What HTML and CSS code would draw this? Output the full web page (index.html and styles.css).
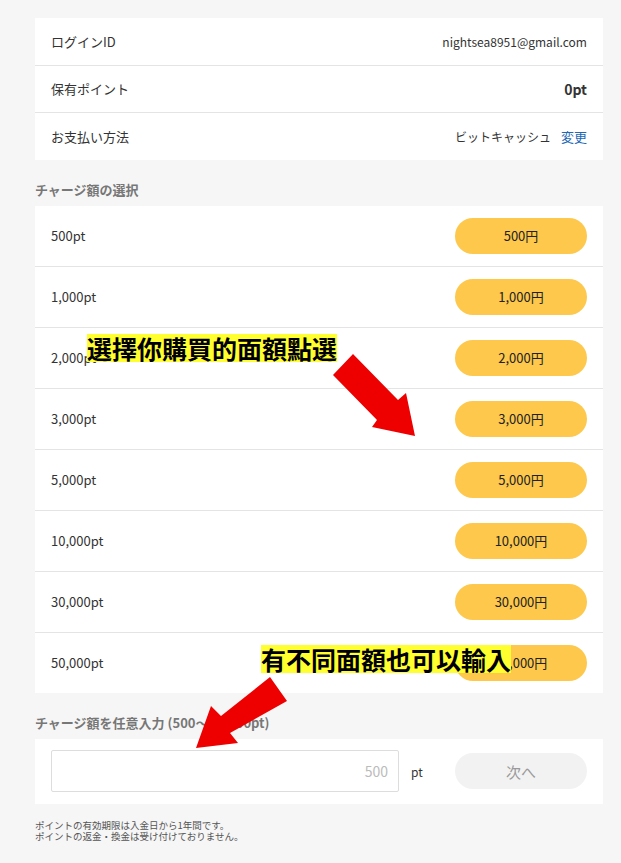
FILE: index.html
```html
<!DOCTYPE html>
<html lang="ja">
<head>
  <meta charset="UTF-8">
  <meta name="viewport" content="width=device-width, initial-scale=1.0">
  <title>ポイントチャージ</title>
  <link rel="stylesheet" href="styles.css">
</head>
<body>

<div class="page">
  <div class="card">
    <div class="info-row">
      <span>ログインID</span>
      <span class="mail">nightsea8951@gmail.com</span>
    </div>
    <div class="info-row">
      <span>保有ポイント</span>
      <span class="points">0pt</span>
    </div>
    <div class="info-row">
      <span>お支払い方法</span>
      <span class="pay">ビットキャッシュ<a href="#" class="change">変更</a></span>
    </div>
  </div>

  <h2 class="section-title">チャージ額の選択</h2>
  <div class="card">
    <div class="charge-row"><span>500pt</span><button class="yen">500円</button></div>
    <div class="charge-row"><span>1,000pt</span><button class="yen">1,000円</button></div>
    <div class="charge-row"><span>2,000pt</span><button class="yen">2,000円</button></div>
    <div class="charge-row"><span>3,000pt</span><button class="yen">3,000円</button></div>
    <div class="charge-row"><span>5,000pt</span><button class="yen">5,000円</button></div>
    <div class="charge-row"><span>10,000pt</span><button class="yen">10,000円</button></div>
    <div class="charge-row"><span>30,000pt</span><button class="yen">30,000円</button></div>
    <div class="charge-row"><span>50,000pt</span><button class="yen">50,000円</button></div>
  </div>

  <h2 class="section-title">チャージ額を任意入力 (500〜50,000pt)</h2>
  <div class="card input-card">
    <input type="text" class="amount" placeholder="500">
    <span class="unit">pt</span>
    <button class="next">次へ</button>
  </div>

  <p class="note">ポイントの有効期限は入金日から1年間です。<br>ポイントの返金・換金は受け付けておりません。</p>
</div>

<!-- annotations drawn over the page -->
<div class="note-label label-1">選擇你購買的面額點選</div>
<div class="note-label label-2">有不同面額也可以輸入</div>
<svg class="arrows" width="621" height="863" viewBox="0 0 621 863">
  <polygon points="353,354 333,375 377,420 372,427 415,436 406,393 398,400" fill="#ee0000"/>
  <polygon points="270,677 287,701 230,733 238,743 196,748 211,706 221,716" fill="#ee0000"/>
</svg>

</body>
</html>
```

FILE: styles.css
```css
body {
  margin: 0;
  background: #f6f6f6;
  font-family: "Noto Sans CJK JP", "Noto Sans", sans-serif;
  color: #333;
  position: relative;
  height: 863px;
  overflow: hidden;
}

.page {
  padding: 18px 18px 0 35px;
}

.card {
  background: #fff;
}

.info-row {
  display: flex;
  justify-content: space-between;
  align-items: center;
  height: 46.5px;
  padding: 0 16px;
  font-size: 13px;
}

.info-row + .info-row,
.charge-row + .charge-row {
  border-top: 1px solid #e4e4e4;
}

.mail {
  font-size: 12px;
}

.points {
  font-weight: bold;
  font-size: 14px;
}

.pay {
  font-size: 12px;
}

.change {
  color: #2368b4;
  text-decoration: none;
  font-size: 13px;
  margin-left: 10px;
}

.section-title {
  margin: 0;
  padding: 22px 0 8px;
  font-size: 13px;
  line-height: 16px;
  font-weight: bold;
  color: #777;
}

.charge-row {
  display: flex;
  justify-content: space-between;
  align-items: center;
  height: 60px;
  padding: 0 16px;
  font-size: 13px;
}

.yen {
  width: 132px;
  height: 36px;
  border: none;
  border-radius: 18px;
  background: #fdc84b;
  color: #222;
  font-family: inherit;
  font-size: 13px;
  font-weight: normal;
  cursor: pointer;
}

.input-card {
  display: flex;
  align-items: center;
  height: 65px;
  padding: 0 16px;
}

.amount {
  width: 348px;
  height: 42px;
  box-sizing: border-box;
  border: 1px solid #ddd;
  border-radius: 2px;
  padding: 0 10px;
  text-align: right;
  font-family: inherit;
  font-size: 14px;
}

.amount::placeholder {
  color: #bbb;
}

.unit {
  margin-left: 12px;
  font-size: 12px;
}

.next {
  margin-left: auto;
  width: 132px;
  height: 36px;
  border: none;
  border-radius: 18px;
  background: #f2f2f2;
  color: #999;
  font-family: inherit;
  font-size: 15px;
}

.note {
  margin: 16px 0 0;
  font-size: 9.5px;
  line-height: 11px;
  color: #555;
}

.note-label {
  position: absolute;
  background: #ffff30;
  color: #000;
  font-family: "Noto Sans CJK TC", sans-serif;
  font-weight: bold;
  font-size: 25px;
  line-height: 28px;
  white-space: nowrap;
}

.label-1 {
  left: 87px;
  top: 334px;
}

.label-2 {
  left: 261px;
  top: 645px;
}

.arrows {
  position: absolute;
  left: 0;
  top: 0;
  pointer-events: none;
}
```
